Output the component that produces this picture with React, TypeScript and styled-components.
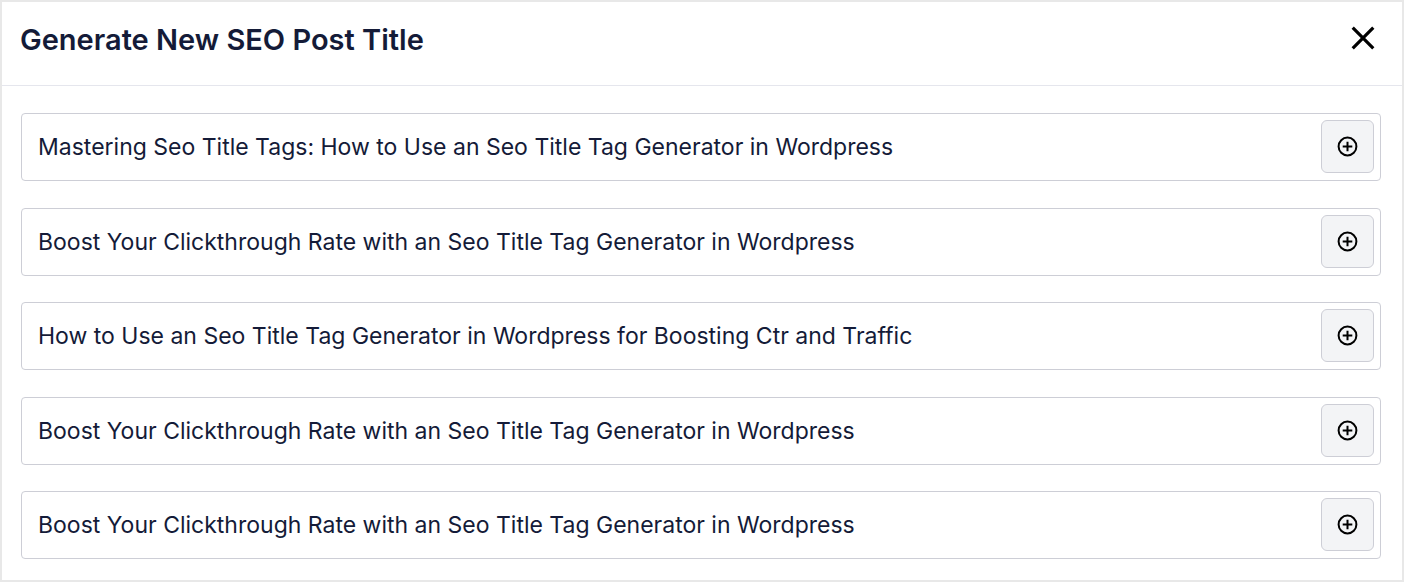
import React from "react";
import styled, { createGlobalStyle } from "styled-components";

const GlobalStyle = createGlobalStyle`
  *, *::before, *::after { box-sizing: border-box; }
  body {
    margin: 0;
    background: #ffffff;
    color: #141b38;
    font-family: Inter, "Liberation Sans", sans-serif;
  }
`;

const Modal = styled.section`
  display: flex;
  flex-direction: column;
  min-height: 100vh;
  border: 2px solid #e8e8e8;
  background: #ffffff;
`;

const Header = styled.header`
  display: flex;
  align-items: flex-start;
  justify-content: space-between;
  padding: 16px 19px 24px 18px;
  border-bottom: 1px solid #e5e6ed;
`;

const Heading = styled.h1`
  margin: 0;
  font-size: 29px;
  line-height: 43px;
  font-weight: 600;
`;

const CloseButton = styled.button`
  display: flex;
  align-items: center;
  justify-content: center;
  width: 40px;
  height: 40px;
  padding: 0;
  border: 0;
  background: transparent;
  color: #000000;
  cursor: pointer;
`;

const TitleList = styled.ul`
  flex: 1;
  display: flex;
  flex-direction: column;
  justify-content: space-between;
  margin: 0;
  padding: 27px 21px 21px 19px;
  list-style: none;
`;

const TitleRow = styled.li`
  display: flex;
  align-items: flex-start;
  justify-content: space-between;
  gap: 16px;
  min-height: 68px;
  padding: 6px 6px 6px 16px;
  border: 1px solid #cdced6;
  border-radius: 4px;
`;

const TitleText = styled.span`
  font-size: 23px;
  line-height: 54px;
`;

const AddButton = styled.button`
  flex: none;
  display: flex;
  align-items: center;
  justify-content: center;
  width: 53px;
  height: 53px;
  padding: 0;
  border: 1px solid #cdced6;
  border-radius: 6px;
  background: #f3f4f6;
  color: #000000;
  cursor: pointer;
`;

const titles = [
  "Mastering Seo Title Tags: How to Use an Seo Title Tag Generator in Wordpress",
  "Boost Your Clickthrough Rate with an Seo Title Tag Generator in Wordpress",
  "How to Use an Seo Title Tag Generator in Wordpress for Boosting Ctr and Traffic",
  "Boost Your Clickthrough Rate with an Seo Title Tag Generator in Wordpress",
  "Boost Your Clickthrough Rate with an Seo Title Tag Generator in Wordpress",
];

function CloseIcon() {
  return (
    <svg width="24" height="24" viewBox="0 0 24 24" fill="none" stroke="currentColor" strokeWidth="3.2" aria-hidden="true">
      <path d="M1.7 1.7L22.3 22.3M22.3 1.7L1.7 22.3" />
    </svg>
  );
}

function PlusCircleIcon() {
  return (
    <svg width="21" height="21" viewBox="0 0 21 21" fill="none" stroke="currentColor" strokeWidth="2" aria-hidden="true">
      <circle cx="10.5" cy="10.5" r="8.9" />
      <path d="M10.5 5.7V15.3M5.7 10.5H15.3" />
    </svg>
  );
}

export default function App() {
  return (
    <>
      <GlobalStyle />
      <Modal aria-labelledby="modal-title">
        <Header>
          <Heading id="modal-title">Generate New SEO Post Title</Heading>
          <CloseButton type="button" aria-label="Close">
            <CloseIcon />
          </CloseButton>
        </Header>
        <TitleList>
          {titles.map((title, index) => (
            <TitleRow key={index}>
              <TitleText>{title}</TitleText>
              <AddButton type="button" aria-label={`Use title: ${title}`}>
                <PlusCircleIcon />
              </AddButton>
            </TitleRow>
          ))}
        </TitleList>
      </Modal>
    </>
  );
}
